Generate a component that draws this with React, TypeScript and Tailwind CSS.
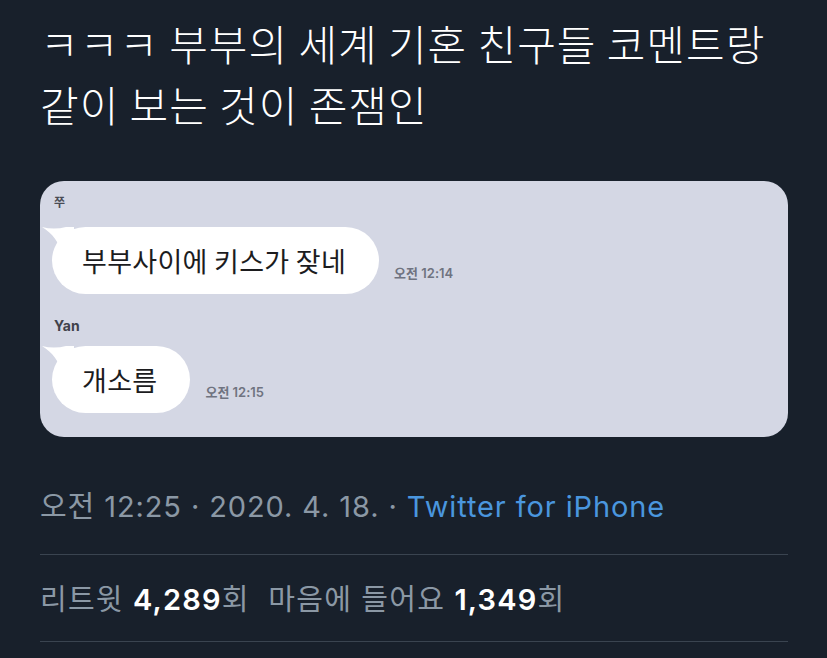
import React from "react";

const KR = "font-['Noto_Sans_CJK_KR',sans-serif]";
const UI = "font-['Inter','Noto_Sans_CJK_KR',sans-serif]";

function Tail() {
  return (
    <svg
      className="absolute left-[-12px] top-[-2px]"
      width="34"
      height="30"
      viewBox="0 0 34 30"
    >
      <path
        d="M2 2 C 10 4, 18 4, 26 2 L 34 2 L 34 30 L 22 30 C 20 18, 12 8, 2 2 Z"
        fill="#ffffff"
      />
    </svg>
  );
}

function Bubble({ text, time }: { text: string; time: string }) {
  return (
    <div className="flex items-end gap-[15px]">
      <div className="relative rounded-full bg-white pl-[30px] pr-[33px] h-[67px] flex items-center">
        <Tail />
        <span className={`${KR} relative text-[27px] text-[#1c1c1e] leading-none tracking-[0.3px]`}>
          {text}
        </span>
      </div>
      <span className={`${UI} mb-[11px] text-[13px] font-semibold text-[#6f7380]`}>{time}</span>
    </div>
  );
}

export default function App() {
  return (
    <div className="min-h-screen w-full bg-[#18202b] px-[40px] pt-[12px]">
      <h1 className={`${KR} text-[42px] leading-[61px] text-white font-light tracking-[1px]`}>
        ㅋㅋㅋ 부부의 세계 기혼 친구들 코멘트랑
        <br />
        같이 보는 것이 존잼인
      </h1>

      {/* chat screenshot */}
      <div className="mt-[47px] w-[748px] h-[256px] rounded-[24px] bg-[#d4d7e4] pl-[14px] pt-[14px] overflow-hidden">
        <div className={`${KR} text-[12px] font-bold text-[#4a4c55] leading-[14px]`}>쭈</div>
        <div className="mt-[18px] ml-[-2px]">
          <Bubble text="부부사이에 키스가 잦네" time="오전 12:14" />
        </div>
        <div className={`${UI} mt-[24px] text-[14px] font-bold text-[#40424b] leading-[16px]`}>Yan</div>
        <div className="mt-[12px] ml-[-2px]">
          <Bubble text="개소름" time="오전 12:15" />
        </div>
      </div>

      <div className={`${UI} mt-[52px] text-[29px] leading-[36px] text-[#8b98a5] tracking-[0.9px]`}>
        오전 12:25 · 2020. 4. 18. · <span className="text-[#4a96de]">Twitter for iPhone</span>
      </div>

      <div className="mt-[29px] h-px w-[748px] bg-[#3a4450]" />

      <div className={`${UI} mt-[27px] text-[29px] leading-[36px] text-[#8b98a5] tracking-[1.2px]`}>
        리트윗 <span className="font-semibold text-white">4,289</span>회&nbsp; 마음에 들어요{" "}
        <span className="font-semibold text-white">1,349</span>회
      </div>

      <div className="mt-[23px] h-px w-[748px] bg-[#3a4450]" />
    </div>
  );
}
